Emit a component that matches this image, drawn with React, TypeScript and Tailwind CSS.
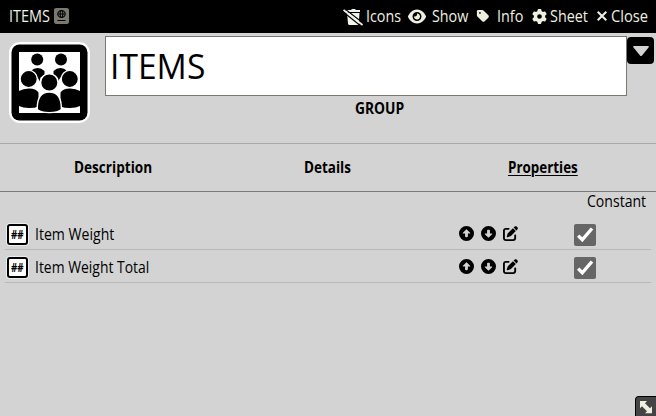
import { useLayoutEffect, useRef, useState } from "react";
import {
  FaCircleDown,
  FaCircleUp,
  FaEye,
  FaGear,
  FaPassport,
  FaPenToSquare,
  FaTag,
} from "react-icons/fa6";

/* A label condensed horizontally to a given width. */
function Label({ text, width, className = "" }: { text: string; width: number; className?: string }) {
  const ref = useRef<HTMLSpanElement>(null);
  const [scale, setScale] = useState(1);
  useLayoutEffect(() => {
    if (ref.current) setScale(width / ref.current.offsetWidth);
  }, [width]);
  return (
    <span className={`block shrink-0 whitespace-nowrap ${className}`} style={{ width }}>
      <span ref={ref} className="inline-block origin-left" style={{ transform: `scaleX(${scale})` }}>
        {text}
      </span>
    </span>
  );
}

function TrashSlash() {
  return (
    <svg viewBox="0 0 20 17" className="mt-[2px] h-[17px] w-5 shrink-0" fill="#f3f3ee">
      <path d="M3 1h5l1-1h3l1 1h4v2H3zM4 4h12.500l-.7 10.500q-.2 1.500-1.500 1.500H6.500q-1.300 0-1.500-1.500z" />
      <path d="M2 0L20.500 14.500" stroke="#000" strokeWidth="1.200" />
      <path d="M.5 1L19.500 16" stroke="#f3f3ee" strokeWidth="1.800" />
      <path d="M0 2.800L18 17.200" stroke="#000" strokeWidth="1.200" />
    </svg>
  );
}

function GroupIcon() {
  return (
    <svg viewBox="0 0 81 81" className="h-[81px] w-[81px]">
      <rect width="81" height="81" rx="11" fill="#fff" />
      <rect x="2.500" y="2.500" width="76" height="76" rx="8" fill="#000" />
      <rect x="10" y="10" width="61" height="61" fill="#fff" />
      <g>
        <circle cx="28.200" cy="17.500" r="6" />
        <circle cx="52" cy="17.500" r="6" />
        <path d="M22.500 28.500q2-2.500 6-2.500t7 3v4l-4 2.500-.5 4-3-5zM57.500 28.500q-2-2.500-6-2.500t-7 3v4l4 2.500.5 4 3-5z" />
      </g>
      <g stroke="#fff" strokeWidth="1.300">
        <circle cx="19.700" cy="37" r="8.600" />
        <circle cx="60.800" cy="37" r="8.600" />
      </g>
      <path d="M10 49q4-2.500 10-2.500 7 0 9.500 4v14Q26 66 20 66q-6 0-10-2zM71 49q-4-2.500-10-2.500-7 0-9.500 4v14Q55 66 61 66q6 0 10-2z" />
      <circle cx="40.300" cy="40.500" r="8.800" stroke="#fff" strokeWidth="1.600" />
      <path d="M28.200 67.500Q28 50 40.300 50t12.100 17.500Q49 70.600 40.300 70.600T28.200 67.500z" stroke="#fff" strokeWidth="1.400" />
    </svg>
  );
}

function Row({ name, width }: { name: string; width: number }) {
  return (
    <div className="mx-[5px] flex h-[33px] border-b border-[#b8b8b8]">
      <div className="mt-[6px] ml-px h-[23px] w-[23px] shrink-0 rounded-[4px] bg-white/60 p-px">
        <div className="flex h-[21px] w-[21px] items-center justify-center rounded-[3px] border-2 border-black bg-white text-[12px] leading-[14px] font-bold">
          <Label text="##" width={13} />
        </div>
      </div>
      <Label text={name} width={width} className="mt-[5px] ml-[6px] leading-[24px]" />
      <div className="mt-[9px] ml-auto flex gap-[7px] text-[15px]">
        <FaCircleUp />
        <FaCircleDown />
        <FaPenToSquare />
      </div>
      <div className="mt-[7px] mr-[55px] ml-[56.500px] h-[22px] w-[22px] shrink-0 rounded-[2px] bg-[#666]">
        <svg viewBox="0 0 22 22" className="block h-[22px] w-[22px]" fill="none" stroke="#fff" strokeWidth="3.400">
          <path d="M4.200 11.600L8.300 15.800L18 4.500" />
        </svg>
      </div>
    </div>
  );
}

export default function App() {
  return (
    <div className="relative flex h-[416px] w-[656px] flex-col overflow-hidden bg-[#d3d3d3] font-['Open_Sans',sans-serif] text-[15.500px] text-black">
      <header className="flex h-[33px] shrink-0 items-center bg-black pb-px pl-[9px] leading-[31px] font-medium text-[#f0f0e0]">
        <Label text="ITEMS" width={41} />
        <FaPassport className="ml-[4px] h-4 w-[15px] text-[#797970]" preserveAspectRatio="none" />
        <div className="ml-auto flex items-center pr-2">
          <TrashSlash />
          <Label text="Icons" width={35} className="ml-[3px]" />
          <FaEye className="ml-[7px] h-[17px] w-[18px]" />
          <Label text="Show" width={36} className="ml-[6px]" />
          <FaTag className="ml-[8px] h-[14px] w-[14px]" />
          <Label text="Info" width={26} className="ml-[7px]" />
          <FaGear className="ml-[9px] h-[15px] w-[15px]" />
          <Label text="Sheet" width={38} className="ml-[3px]" />
          <svg viewBox="0 0 10 10" className="ml-[9px] h-[10px] w-[10px]" stroke="currentColor" strokeWidth="2">
            <path d="M.7.7l8.600 8.600M9.300.7L.7 9.300" />
          </svg>
          <Label text="Close" width={37} className="ml-[4px]" />
        </div>
      </header>
      <section className="flex h-[111px] shrink-0 border-b border-[#a9a9a9]">
        <div className="mt-[9px] ml-[9px] shrink-0">
          <GroupIcon />
        </div>
        <div className="mt-[3px] ml-[15px] w-[522px] shrink-0">
          <div className="flex h-[60px] items-center border border-[#7a7971] bg-white pl-[4px] text-[34px] leading-[58px]">
            <Label text="ITEMS" width={95} />
          </div>
          <div className="flex justify-center pl-[26px] leading-[24px] font-bold">
            <Label text="GROUP" width={49} />
          </div>
        </div>
        <div className="mt-[4px] flex h-[27px] w-[27px] shrink-0 items-center justify-center rounded-[4px] bg-black">
          <svg viewBox="0 0 16 10" className="h-[10px] w-4" fill="#d3d3d3">
            <path d="M1 0h14q1.500.2.5 1.500L9 9.400q-1 1-2 0L.5 1.500Q-.5.200 1 0z" />
          </svg>
        </div>
      </section>
      <nav className="flex h-[48px] shrink-0 border-b border-[#7a7a7a] px-[5px] leading-[46px] font-bold">
        <div className="flex flex-1 justify-center"><Label text="Description" width={78} /></div>
        <div className="flex flex-1 justify-center"><Label text="Details" width={47} /></div>
        <div className="flex flex-1 justify-center">
          <Label text="Properties" width={70} className="[&>span]:underline [&>span]:decoration-1 [&>span]:underline-offset-2" />
        </div>
      </nav>
      <div className="flex h-[25px] shrink-0 justify-end pr-[10px] leading-[18px]">
        <Label text="Constant" width={59} />
      </div>
      <Row name="Item Weight" width={79} />
      <Row name="Item Weight Total" width={114} />
      <div className="absolute right-0 bottom-0 h-5 w-[21px] rounded-tl-[4px] border-t border-l border-black bg-[#444]">
        <svg viewBox="0 0 20 20" className="h-5 w-5" fill="#f0f0e0">
          <path d="M4 4h7L9 6.300l5 5 2-2v7h-7l2-2-5-5-2 2z" />
        </svg>
      </div>
    </div>
  );
}
